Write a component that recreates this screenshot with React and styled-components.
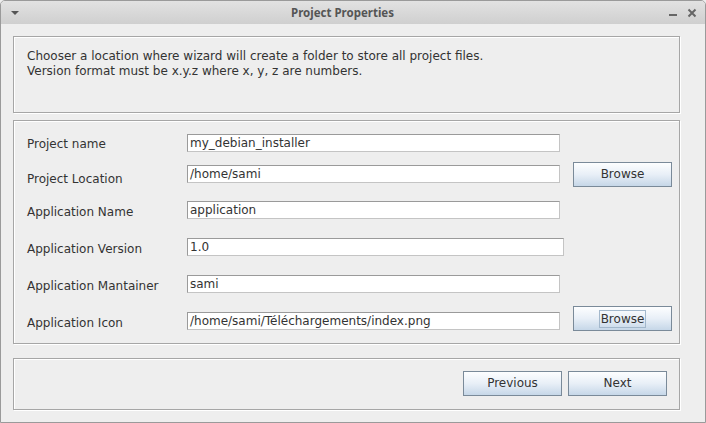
import React from "react";
import styled, { createGlobalStyle } from "styled-components";

const Global = createGlobalStyle`
  html, body { margin: 0; padding: 0; background: #eeeeee; }
  body { font-family: "DejaVu Sans", "Liberation Sans", sans-serif; }
  * { box-sizing: border-box; }
`;

const Window = styled.div`
  width: 706px;
  height: 423px;
  border: 1px solid #9a9a9a;
  border-top-left-radius: 5px;
  border-top-right-radius: 5px;
  background: #eeeeee;
  display: flex;
  flex-direction: column;
  overflow: hidden;
`;

const TitleBar = styled.div`
  height: 23px;
  flex: none;
  display: flex;
  align-items: center;
  padding: 0 8px 0 9px;
  background: linear-gradient(#e2e2e2, #cfcfcf);
  color: #555555;
`;

const Title = styled.div`
  flex: 1;
  text-align: center;
  font-family: "Noto Sans", "Open Sans", sans-serif;
  font-weight: bold;
  font-size: 11.5px;
  padding-right: 3px;
`;

const TitleIcon = styled.svg`
  display: block;
  flex: none;
`;

const Controls = styled.div`
  display: flex;
  gap: 9px;
  align-items: center;
`;

const Body = styled.div`
  flex: 1;
  display: flex;
  flex-direction: column;
  padding: 12px 25px 0 12px;
`;

const Panel = styled.div`
  border: 1px solid #a6a6a6;
  box-shadow: inset 1px 1px 0 #ffffff, 1px 1px 0 #ffffff;
  margin-top: ${(p) => p.$mt || 0}px;
  height: ${(p) => p.$h}px;
  flex: none;
`;

const InfoText = styled.div`
  padding: 12px 0 0 13px;
  font-size: 12px;
  line-height: 15px;
  color: #333333;
`;

const FormPanel = styled(Panel)`
  padding: 10px 0 0 13px;
  display: flex;
  flex-direction: column;
`;

const Row = styled.div`
  display: flex;
  align-items: center;
  height: 24px;
  margin-top: ${(p) => p.$mt || 0}px;
`;

const Label = styled.div`
  width: 160px;
  flex: none;
  font-size: 12px;
  color: #333333;
  margin-top: ${(p) => (p.$shift || 0) * 2}px;
`;

const Field = styled.div`
  width: ${(p) => p.$w || 373}px;
  height: 18px;
  flex: none;
  background: #ffffff;
  border: 1px solid #9a9a9a;
  border-right-color: #c4c4c4;
  border-bottom-color: #c4c4c4;
  font-size: 12px;
  line-height: 16px;
  padding-left: 2px;
  color: #333333;
  white-space: nowrap;
  overflow: hidden;
`;

const Button = styled.div`
  width: 99px;
  height: 25px;
  flex: none;
  border: 1px solid #7a8a99;
  background: linear-gradient(#fdfeff 0%, #e8eff7 50%, #c6d7e8 100%);
  display: flex;
  align-items: center;
  justify-content: center;
  font-size: 12px;
  color: #333333;
  margin-left: ${(p) => p.$ml || 0}px;
  margin-top: ${(p) => p.$mt || 0}px;
`;

const Focus = styled.span`
  border: 1px solid #a3b8cc;
  padding: 1px 1px 0;
  line-height: 15px;
`;

const Footer = styled(Panel)`
  display: flex;
  justify-content: flex-end;
  align-items: center;
  gap: 6px;
  padding: 0 12px 2px 0;
`;

const rows = [
  { label: "Project name", value: "my_debian_installer", mt: 0, shift: 1 },
  { label: "Project Location", value: "/home/sami", mt: 7, shift: 5, browse: true },
  { label: "Application Name", value: "application", mt: 12, shift: 2 },
  { label: "Application Version", value: "1.0", mt: 13, shift: 2, w: 377 },
  { label: "Application Mantainer", value: "sami", mt: 13, shift: 2 },
  { label: "Application Icon", value: "/home/sami/Téléchargements/index.png", mt: 13, shift: 2, browse: true, focus: true },
];

export default function App() {
  return (
    <>
      <Global />
      <Window>
        <TitleBar>
          <TitleIcon width="10" height="6" viewBox="0 0 10 6">
            <path d="M1 1 L9 1 L5 5 Z" fill="#555" />
          </TitleIcon>
          <Title>Project Properties</Title>
          <Controls>
            <TitleIcon width="10" height="10" viewBox="0 0 10 10">
              <rect x="1" y="6" width="8" height="2" fill="#666" />
            </TitleIcon>
            <TitleIcon width="10" height="10" viewBox="0 0 10 10">
              <path d="M1.5 1.5 L8.5 8.5 M8.5 1.5 L1.5 8.5" stroke="#666" strokeWidth="2" />
            </TitleIcon>
          </Controls>
        </TitleBar>
        <Body>
          <Panel $h={77}>
            <InfoText>
              Chooser a location where wizard will create a folder to store all project files.
              <br />
              Version format must be x.y.z where x, y, z are numbers.
            </InfoText>
          </Panel>
          <FormPanel $mt={7} $h={224}>
            {rows.map((r) => (
              <Row key={r.label} $mt={r.mt}>
                <Label $shift={r.shift}>{r.label}</Label>
                <Field $w={r.w}>{r.value}</Field>
                {r.browse && (
                  <Button $ml={13} $mt={r.focus ? -5 : 0}>
                    {r.focus ? <Focus>Browse</Focus> : "Browse"}
                  </Button>
                )}
              </Row>
            ))}
          </FormPanel>
          <Footer $mt={14} $h={52}>
            <Button>Previous</Button>
            <Button>Next</Button>
          </Footer>
        </Body>
      </Window>
    </>
  );
}
